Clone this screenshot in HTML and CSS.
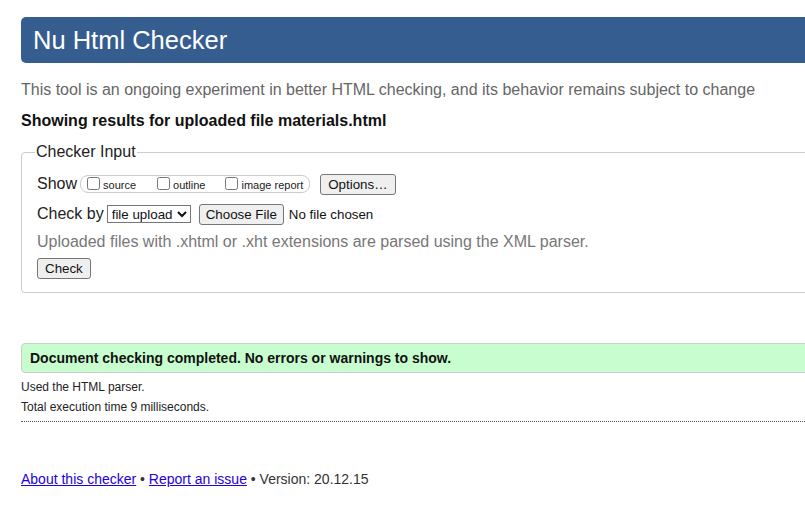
FILE: index.html
```html
<!DOCTYPE html>
<html>
<head>
<meta charset="utf-8">
<title>Nu Html Checker</title>
<link rel="stylesheet" href="styles.css">
</head>
<body>
<div class="page">
  <h1 class="title">Nu Html Checker</h1>
  <p class="intro">This tool is an ongoing experiment in better HTML checking, and its behavior remains subject to change</p>
  <p class="showing">Showing results for uploaded file materials.html</p>
  <fieldset class="input">
    <legend>Checker Input</legend>
    <div class="row row-first">
      <span class="label">Show</span>
      <span class="opts">
        <label class="opt opt-source"><input type="checkbox">source</label>
        <label class="opt opt-outline"><input type="checkbox">outline</label>
        <label class="opt"><input type="checkbox">image report</label>
      </span>
      <button class="btn">Options…</button>
    </div>
    <div class="row">
      <span class="label">Check by</span>
      <select class="sel"><option>file upload</option></select>
      <button class="btn btn-file">Choose File</button>
      <span class="nofile">No file chosen</span>
    </div>
    <p class="hint">Uploaded files with .xhtml or .xht extensions are parsed using the XML parser.</p>
    <div class="row row-last">
      <button class="btn">Check</button>
    </div>
  </fieldset>
  <div class="success">Document checking completed. No errors or warnings to show.</div>
  <p class="meta">Used the HTML parser.</p>
  <p class="meta">Total execution time 9 milliseconds.</p>
  <hr class="sep">
  <p class="footer"><a href="#">About this checker</a> • <a href="#">Report an issue</a> • Version: 20.12.15</p>
</div>
</body>
</html>
```

FILE: styles.css
```css
html, body {
  margin: 0;
  padding: 0;
  overflow: hidden;
  background: #fff;
}
body {
  font-family: "Liberation Sans", Arial, sans-serif;
  color: #222;
}
.page {
  width: 1000px;
  padding: 17px 0 0 21px;
}
.title {
  margin: 0;
  height: 46px;
  box-sizing: border-box;
  background: #365d8f;
  color: #fff;
  font-weight: normal;
  font-size: 25.5px;
  line-height: 46px;
  padding-left: 12px;
  border-radius: 5px;
}
.intro {
  margin: 17px 0 0;
  font-size: 16px;
  line-height: 20px;
  color: #666;
}
.showing {
  margin: 11px 0 0;
  font-size: 16px;
  line-height: 20px;
  font-weight: bold;
  color: #111;
}
.input {
  margin: 12px 0 0;
  padding: 6px 15px 14px;
  border: 1px solid #ccc;
  border-radius: 4px;
}
.input legend {
  font-size: 16px;
  padding: 0 1px;
  margin-left: -2px;
  color: #222;
}
.row {
  display: flex;
  align-items: center;
  height: 20px;
  margin-top: 4px;
  margin-bottom: 10px;
}
.row-first {
  margin-top: 7px;
}
.row-last {
  margin-top: 6px;
  margin-bottom: 0;
}
.label {
  font-size: 16px;
  color: #222;
  margin-right: 3px;
}
.opts {
  display: inline-flex;
  align-items: center;
  border: 1px solid #ccc;
  border-radius: 8px;
  height: 18px;
  box-sizing: border-box;
  padding: 0 6px 0 6px;
  margin-right: 10px;
}
.opt {
  display: inline-flex;
  align-items: center;
  font-size: 11px;
  color: #222;
  margin-top: 1px;
}
.opt input {
  margin: 0 3px 2px 0;
  width: 13px;
  height: 13px;
}
.opt-source { margin-right: 21px; }
.opt-outline { margin-right: 20px; }
.btn {
  font-family: "Liberation Sans", Arial, sans-serif;
  font-size: 13.33px;
  height: 21px;
  padding: 0 7px;
  background: #efefef;
  border: 1px solid #767676;
  border-radius: 3px;
  color: #111;
}
.sel {
  font-family: "Liberation Sans", Arial, sans-serif;
  font-size: 13.33px;
  height: 18px;
  width: 84px;
  padding: 0;
  border: 1px solid #767676;
  border-radius: 0;
  background: #fff;
  color: #111;
  margin-right: 8px;
}
.btn-file {
  height: 21px;
  padding: 0 6px;
}
.nofile {
  font-size: 13.33px;
  color: #111;
  margin-left: 5px;
}
.hint {
  margin: -2px 0 0;
  font-size: 16px;
  line-height: 20px;
  color: #777;
}
.success {
  margin-top: 50px;
  background: #c8fecf;
  border: 1px solid #ccc;
  border-radius: 4px;
  height: 30px;
  box-sizing: border-box;
  line-height: 28px;
  padding-left: 8px;
  font-size: 14px;
  font-weight: bold;
  color: #111;
}
.meta {
  margin: 7px 0 0;
  font-size: 12px;
  line-height: 14px;
  color: #222;
}
.meta + .meta {
  margin-top: 6px;
}
.sep {
  margin: 7px 0 0;
  border: 0;
  border-top: 1px dotted #555;
  height: 0;
}
.footer {
  margin: 49px 0 0;
  font-size: 14px;
  line-height: 16px;
  color: #333;
}
.footer a {
  color: #2200dd;
}
```
